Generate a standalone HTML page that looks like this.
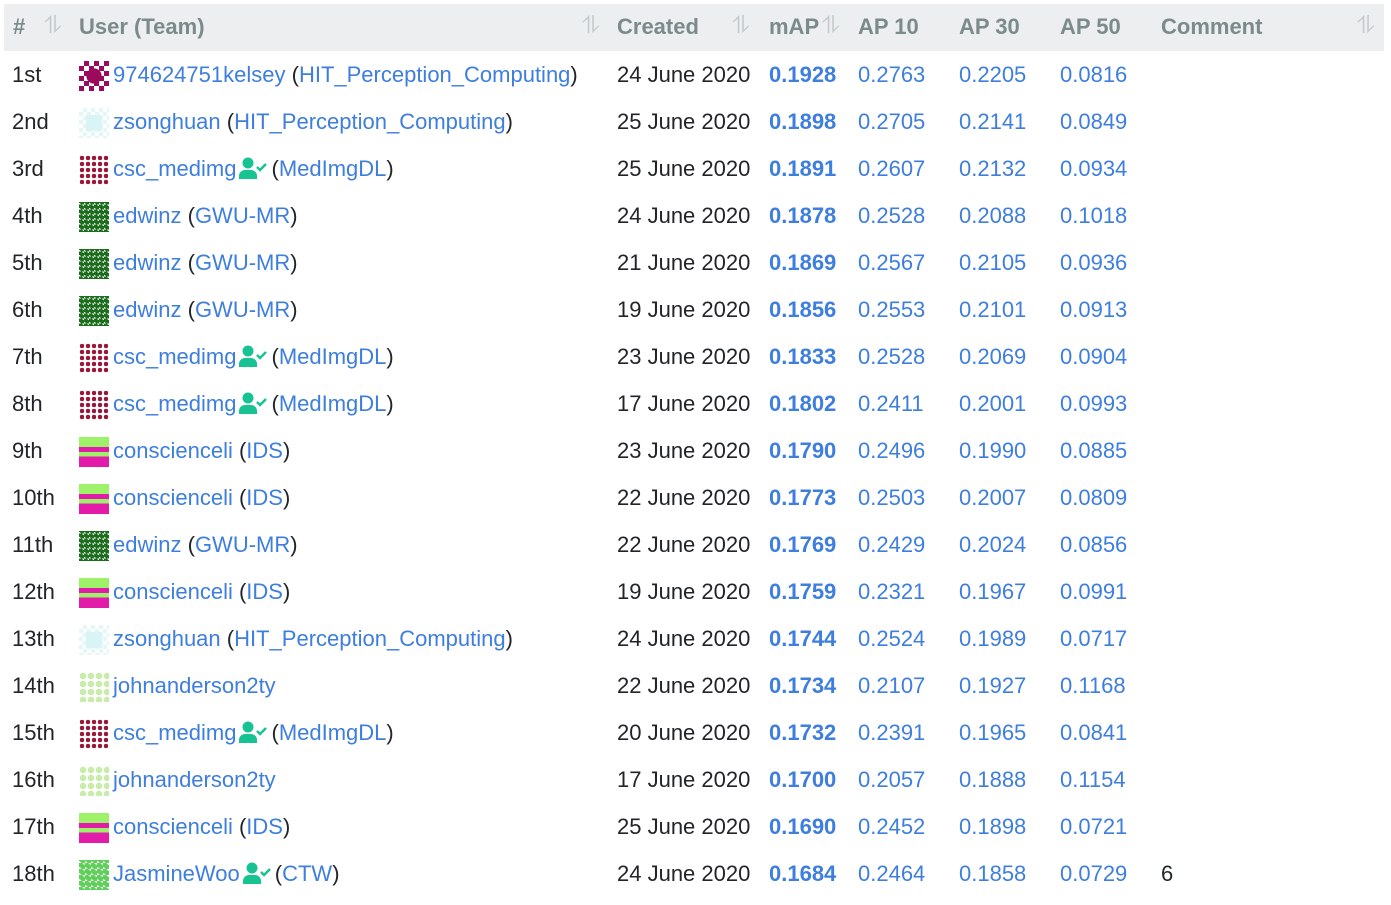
<!DOCTYPE html>
<html><head><meta charset="utf-8"><style>
*{margin:0;padding:0;box-sizing:border-box}
body{width:1391px;height:905px;background:#fff;font-family:"Liberation Sans",sans-serif;font-size:22px;color:#212529;position:relative;overflow:hidden}
.hd{position:absolute;left:4px;top:4px;width:1380px;height:47px;background:#eceeef;color:#7b8a8b;font-weight:bold}
.hd span{position:absolute;top:10px}
.s{color:#c4c9cc;font-weight:normal;font-size:24px;top:8px!important}
.r{position:absolute;left:0;width:1391px;height:47px}
.r span{position:absolute;top:10px;white-space:nowrap}
.b{color:#3d7ede}
.m{font-weight:bold;color:#3d7ede}
.av{position:absolute;left:79px;top:9px;width:30px;height:30px}
.k{background:radial-gradient(circle at 50% 50%,#9c0a5e 35%,transparent 37%),repeating-conic-gradient(#9c0a5e 0 25%,#fff 0 50%) 0 0/10px 10px}
.z{background:linear-gradient(#d9f4f4,#d9f4f4) center/16px 16px no-repeat,repeating-conic-gradient(#e4f7f7 0 25%,#fff 0 50%) 0 0/8px 8px}
.c{background:radial-gradient(circle,#9a1739 50%,#fff 55%) 0 0/6px 6px}
.e{background:repeating-conic-gradient(#1b6e1b 0 25%,#fff 0 35%,#1b6e1b 0 50%) 0 0/5px 5px}
.i{background:linear-gradient(#9ef26a 0 33%,#e21ba8 33% 50%,#9ef26a 50% 65%,#e21ba8 65%)}
.j{background:radial-gradient(circle,#c9ecab 55%,#fff 60%) 0 0/8px 8px}
.w{background:repeating-conic-gradient(#5fd05a 0 25%,#fff 0 35%,#5fd05a 0 50%) 0 0/6px 6px}
.v{display:inline-block;vertical-align:-3px;margin:0 4px 0 3px}
</style></head><body>
<div class="hd">
<span style="left:9px">#</span><span class="s" style="left:40px">⥮</span>
<span style="left:75px">User (Team)</span><span class="s" style="left:578px">⥮</span>
<span style="left:613px">Created</span><span class="s" style="left:728px">⥮</span>
<span style="left:765px">mAP</span><span class="s" style="left:818px">⥮</span>
<span style="left:854px">AP 10</span><span style="left:955px">AP 30</span><span style="left:1056px">AP 50</span>
<span style="left:1157px">Comment</span><span class="s" style="left:1353px">⥮</span>
</div>

<div class="r" style="top:52px"><span style="left:12px">1st</span><div class="av k"></div><span style="left:113px"><a class="b">974624751kelsey</a> (<a class="b">HIT_Perception_Computing</a>)</span><span style="left:617px">24 June 2020</span><span class="m" style="left:769px">0.1928</span><span class="b" style="left:858px">0.2763</span><span class="b" style="left:959px">0.2205</span><span class="b" style="left:1060px">0.0816</span></div>
<div class="r" style="top:99px"><span style="left:12px">2nd</span><div class="av z"></div><span style="left:113px"><a class="b">zsonghuan</a> (<a class="b">HIT_Perception_Computing</a>)</span><span style="left:617px">25 June 2020</span><span class="m" style="left:769px">0.1898</span><span class="b" style="left:858px">0.2705</span><span class="b" style="left:959px">0.2141</span><span class="b" style="left:1060px">0.0849</span></div>
<div class="r" style="top:146px"><span style="left:12px">3rd</span><div class="av c"></div><span style="left:113px"><a class="b">csc_medimg</a><svg class="v" width="28" height="22" viewBox="0 0 28 22"><circle cx="9" cy="6" r="5.5" fill="#17c393"/><path d="M0 22v-3a6 6 0 0 1 6-6h6a6 6 0 0 1 6 6v3z" fill="#17c393"/><path d="M18 10l3 3 6-6" stroke="#17c393" stroke-width="2.5" fill="none"/></svg>(<a class="b">MedImgDL</a>)</span><span style="left:617px">25 June 2020</span><span class="m" style="left:769px">0.1891</span><span class="b" style="left:858px">0.2607</span><span class="b" style="left:959px">0.2132</span><span class="b" style="left:1060px">0.0934</span></div>
<div class="r" style="top:193px"><span style="left:12px">4th</span><div class="av e"></div><span style="left:113px"><a class="b">edwinz</a> (<a class="b">GWU-MR</a>)</span><span style="left:617px">24 June 2020</span><span class="m" style="left:769px">0.1878</span><span class="b" style="left:858px">0.2528</span><span class="b" style="left:959px">0.2088</span><span class="b" style="left:1060px">0.1018</span></div>
<div class="r" style="top:240px"><span style="left:12px">5th</span><div class="av e"></div><span style="left:113px"><a class="b">edwinz</a> (<a class="b">GWU-MR</a>)</span><span style="left:617px">21 June 2020</span><span class="m" style="left:769px">0.1869</span><span class="b" style="left:858px">0.2567</span><span class="b" style="left:959px">0.2105</span><span class="b" style="left:1060px">0.0936</span></div>
<div class="r" style="top:287px"><span style="left:12px">6th</span><div class="av e"></div><span style="left:113px"><a class="b">edwinz</a> (<a class="b">GWU-MR</a>)</span><span style="left:617px">19 June 2020</span><span class="m" style="left:769px">0.1856</span><span class="b" style="left:858px">0.2553</span><span class="b" style="left:959px">0.2101</span><span class="b" style="left:1060px">0.0913</span></div>
<div class="r" style="top:334px"><span style="left:12px">7th</span><div class="av c"></div><span style="left:113px"><a class="b">csc_medimg</a><svg class="v" width="28" height="22" viewBox="0 0 28 22"><circle cx="9" cy="6" r="5.5" fill="#17c393"/><path d="M0 22v-3a6 6 0 0 1 6-6h6a6 6 0 0 1 6 6v3z" fill="#17c393"/><path d="M18 10l3 3 6-6" stroke="#17c393" stroke-width="2.5" fill="none"/></svg>(<a class="b">MedImgDL</a>)</span><span style="left:617px">23 June 2020</span><span class="m" style="left:769px">0.1833</span><span class="b" style="left:858px">0.2528</span><span class="b" style="left:959px">0.2069</span><span class="b" style="left:1060px">0.0904</span></div>
<div class="r" style="top:381px"><span style="left:12px">8th</span><div class="av c"></div><span style="left:113px"><a class="b">csc_medimg</a><svg class="v" width="28" height="22" viewBox="0 0 28 22"><circle cx="9" cy="6" r="5.5" fill="#17c393"/><path d="M0 22v-3a6 6 0 0 1 6-6h6a6 6 0 0 1 6 6v3z" fill="#17c393"/><path d="M18 10l3 3 6-6" stroke="#17c393" stroke-width="2.5" fill="none"/></svg>(<a class="b">MedImgDL</a>)</span><span style="left:617px">17 June 2020</span><span class="m" style="left:769px">0.1802</span><span class="b" style="left:858px">0.2411</span><span class="b" style="left:959px">0.2001</span><span class="b" style="left:1060px">0.0993</span></div>
<div class="r" style="top:428px"><span style="left:12px">9th</span><div class="av i"></div><span style="left:113px"><a class="b">conscienceli</a> (<a class="b">IDS</a>)</span><span style="left:617px">23 June 2020</span><span class="m" style="left:769px">0.1790</span><span class="b" style="left:858px">0.2496</span><span class="b" style="left:959px">0.1990</span><span class="b" style="left:1060px">0.0885</span></div>
<div class="r" style="top:475px"><span style="left:12px">10th</span><div class="av i"></div><span style="left:113px"><a class="b">conscienceli</a> (<a class="b">IDS</a>)</span><span style="left:617px">22 June 2020</span><span class="m" style="left:769px">0.1773</span><span class="b" style="left:858px">0.2503</span><span class="b" style="left:959px">0.2007</span><span class="b" style="left:1060px">0.0809</span></div>
<div class="r" style="top:522px"><span style="left:12px">11th</span><div class="av e"></div><span style="left:113px"><a class="b">edwinz</a> (<a class="b">GWU-MR</a>)</span><span style="left:617px">22 June 2020</span><span class="m" style="left:769px">0.1769</span><span class="b" style="left:858px">0.2429</span><span class="b" style="left:959px">0.2024</span><span class="b" style="left:1060px">0.0856</span></div>
<div class="r" style="top:569px"><span style="left:12px">12th</span><div class="av i"></div><span style="left:113px"><a class="b">conscienceli</a> (<a class="b">IDS</a>)</span><span style="left:617px">19 June 2020</span><span class="m" style="left:769px">0.1759</span><span class="b" style="left:858px">0.2321</span><span class="b" style="left:959px">0.1967</span><span class="b" style="left:1060px">0.0991</span></div>
<div class="r" style="top:616px"><span style="left:12px">13th</span><div class="av z"></div><span style="left:113px"><a class="b">zsonghuan</a> (<a class="b">HIT_Perception_Computing</a>)</span><span style="left:617px">24 June 2020</span><span class="m" style="left:769px">0.1744</span><span class="b" style="left:858px">0.2524</span><span class="b" style="left:959px">0.1989</span><span class="b" style="left:1060px">0.0717</span></div>
<div class="r" style="top:663px"><span style="left:12px">14th</span><div class="av j"></div><span style="left:113px"><a class="b">johnanderson2ty</a></span><span style="left:617px">22 June 2020</span><span class="m" style="left:769px">0.1734</span><span class="b" style="left:858px">0.2107</span><span class="b" style="left:959px">0.1927</span><span class="b" style="left:1060px">0.1168</span></div>
<div class="r" style="top:710px"><span style="left:12px">15th</span><div class="av c"></div><span style="left:113px"><a class="b">csc_medimg</a><svg class="v" width="28" height="22" viewBox="0 0 28 22"><circle cx="9" cy="6" r="5.5" fill="#17c393"/><path d="M0 22v-3a6 6 0 0 1 6-6h6a6 6 0 0 1 6 6v3z" fill="#17c393"/><path d="M18 10l3 3 6-6" stroke="#17c393" stroke-width="2.5" fill="none"/></svg>(<a class="b">MedImgDL</a>)</span><span style="left:617px">20 June 2020</span><span class="m" style="left:769px">0.1732</span><span class="b" style="left:858px">0.2391</span><span class="b" style="left:959px">0.1965</span><span class="b" style="left:1060px">0.0841</span></div>
<div class="r" style="top:757px"><span style="left:12px">16th</span><div class="av j"></div><span style="left:113px"><a class="b">johnanderson2ty</a></span><span style="left:617px">17 June 2020</span><span class="m" style="left:769px">0.1700</span><span class="b" style="left:858px">0.2057</span><span class="b" style="left:959px">0.1888</span><span class="b" style="left:1060px">0.1154</span></div>
<div class="r" style="top:804px"><span style="left:12px">17th</span><div class="av i"></div><span style="left:113px"><a class="b">conscienceli</a> (<a class="b">IDS</a>)</span><span style="left:617px">25 June 2020</span><span class="m" style="left:769px">0.1690</span><span class="b" style="left:858px">0.2452</span><span class="b" style="left:959px">0.1898</span><span class="b" style="left:1060px">0.0721</span></div>
<div class="r" style="top:851px"><span style="left:12px">18th</span><div class="av w"></div><span style="left:113px"><a class="b">JasmineWoo</a><svg class="v" width="28" height="22" viewBox="0 0 28 22"><circle cx="9" cy="6" r="5.5" fill="#17c393"/><path d="M0 22v-3a6 6 0 0 1 6-6h6a6 6 0 0 1 6 6v3z" fill="#17c393"/><path d="M18 10l3 3 6-6" stroke="#17c393" stroke-width="2.5" fill="none"/></svg>(<a class="b">CTW</a>)</span><span style="left:617px">24 June 2020</span><span class="m" style="left:769px">0.1684</span><span class="b" style="left:858px">0.2464</span><span class="b" style="left:959px">0.1858</span><span class="b" style="left:1060px">0.0729</span><span style="left:1161px">6</span></div>
</body></html>
